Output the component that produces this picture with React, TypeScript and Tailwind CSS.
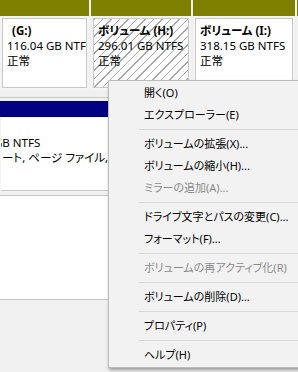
import React from "react";

const font = "font-['Noto_Sans','Noto_Sans_CJK_JP',sans-serif] [font-feature-settings:'palt']";

type Item = { label: string; disabled?: boolean } | "sep";

const menu: Item[] = [
  { label: "開く(O)" },
  { label: "エクスプローラー(E)" },
  "sep",
  { label: "ボリュームの拡張(X)..." },
  { label: "ボリュームの縮小(H)..." },
  { label: "ミラーの追加(A)...", disabled: true },
  "sep",
  { label: "ドライブ文字とパスの変更(C)..." },
  { label: "フォーマット(F)..." },
  "sep",
  { label: "ボリュームの再アクティブ化(R)", disabled: true },
  "sep",
  { label: "ボリュームの削除(D)..." },
  "sep",
  { label: "プロパティ(P)" },
  "sep",
  { label: "ヘルプ(H)" },
];

function Partition({
  width,
  lines,
  hatched,
  indent,
}: {
  width: string;
  lines: string[];
  hatched?: boolean;
  indent?: boolean;
}) {
  return (
    <div className={`${width} shrink-0 flex flex-col bg-white`}>
      <div className="h-[16px] bg-[#808000]" />
      <div className="flex-1 p-[2px] bg-[#f4f4f4]">
        <div
          className={`h-full border border-[#c8c8c8] pt-[4px] overflow-hidden whitespace-nowrap text-[11.5px] leading-[15px] text-black ${
            hatched
              ? "bg-[repeating-linear-gradient(135deg,#a8a8a8_0px,#a8a8a8_1px,#ffffff_1px,#ffffff_6px)] pl-[4px]"
              : "bg-white pl-[4px]"
          }`}
        >
          {lines.map((l, i) => (
            <div key={i} className={i === 0 ? `font-bold ${indent ? "pl-[5px]" : ""}` : ""}>
              {l}
            </div>
          ))}
        </div>
      </div>
    </div>
  );
}

export default function App() {
  return (
    <div className={`relative w-[298px] h-[372px] overflow-hidden bg-[#f0f0f0] ${font}`}>
      {/* disk row 1 */}
      <div className="flex gap-[2px] h-[90px] bg-[#f0f0f0]">
        <Partition width="w-[89px]" lines={["(G:)", "116.04 GB NTFS", "正常"]} indent />
        <Partition width="w-[100px]" lines={["ボリューム  (H:)", "296.01 GB NTFS", "正常"]} hatched />
        <Partition width="w-[102px]" lines={["ボリューム  (I:)", "318.15 GB NTFS", "正常"]} />
        <Partition width="w-[20px]" lines={[""]} />
      </div>

      {/* disk row 2 */}
      <div className="mt-[7px] border-t border-[#c8c8c8] pt-[3px]">
        <div className="h-[16px] bg-[#000080]" />
        <div className="p-[1px] bg-[#f4f4f4]">
          <div className="h-[73px] bg-white border-b border-[#c8c8c8] pt-[17px] whitespace-nowrap overflow-hidden text-[11.5px] leading-[15px] text-black">
            <div className="-ml-[7px]">GB NTFS</div>
            <div className="ml-[1px]">ート, ページ ファイル, クラッシュ ダンプ</div>
          </div>
        </div>
      </div>

      <div className="mt-[3px] h-[105px] bg-white border-t border-b border-[#c8c8c8]" />

      {/* context menu */}
      <div className="absolute left-[108px] top-[80px] w-[200px] bg-[#f2f2f2] border border-[#bcbcbc] py-[1px] shadow-[1px_2px_3px_rgba(0,0,0,0.35)]">
        {menu.map((m, i) =>
          m === "sep" ? (
            <div key={i} className="h-[7px] flex items-center pl-[30px]">
              <div className="h-px w-full bg-[#d7d7d7]" />
            </div>
          ) : (
            <div
              key={i}
              className={`h-[22px] flex items-center pl-[35px] text-[11px] whitespace-nowrap ${
                m.disabled ? "text-[#8a8a8a]" : "text-black"
              }`}
            >
              {m.label}
            </div>
          )
        )}
      </div>
    </div>
  );
}
